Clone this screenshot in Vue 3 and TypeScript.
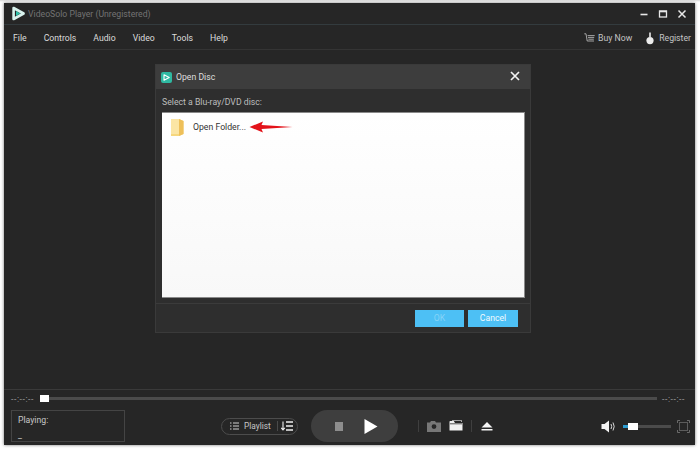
<script setup lang="ts">
const menus: string[] = ['File', 'Controls', 'Audio', 'Video', 'Tools', 'Help']
</script>

<template>
  <div class="page">
    <div class="win">
      <header class="titlebar">
        <svg class="logo" width="15" height="15" viewBox="0 0 15 15">
          <path d="M2.6 2 L12.6 7.5 L2.6 13 Z" fill="none" stroke="#d9f3ee" stroke-width="2.6" stroke-linejoin="round" />
          <path d="M5 5 L9.4 7.5 L5 10 Z" fill="#2fc0a8" />
        </svg>
        <span class="apptitle">VideoSolo Player (Unregistered)</span>
        <div class="winbtns">
          <svg width="10" height="10" viewBox="0 0 10 10"><path d="M1.5 5.5H8.5" stroke="#e8e8e8" stroke-width="1.6" /></svg>
          <svg width="10" height="10" viewBox="0 0 10 10"><rect x="1.5" y="2" width="7" height="6" fill="none" stroke="#e8e8e8" stroke-width="1.3" /><path d="M1 2.5H9" stroke="#e8e8e8" stroke-width="1.6" /></svg>
          <svg width="10" height="10" viewBox="0 0 10 10"><path d="M1.5 1.5L8.5 8.5M8.5 1.5L1.5 8.5" stroke="#e8e8e8" stroke-width="1.5" /></svg>
        </div>
      </header>
      <nav class="menubar">
        <div class="menus">
          <span v-for="m in menus" :key="m">{{ m }}</span>
        </div>
        <div class="actions">
          <span class="action">
            <svg width="11" height="11" viewBox="0 0 11 11"><path d="M0.3 0.8H2L3.2 8H10M3.6 2.6H10.7M4 4.4H10.2M4.4 6.2H9.8" fill="none" stroke="#c4c4c4" stroke-width="0.8" /></svg>
            Buy Now
          </span>
          <span class="action reg">
            <svg width="8" height="13" viewBox="0 0 8 13"><path d="M3.2 0.5H4.8V5H3.2Z" fill="#ececec" /><circle cx="4" cy="8.6" r="3.6" fill="#ececec" /></svg>
            Register
          </span>
        </div>
      </nav>

      <main class="stage">
        <section class="dialog">
          <div class="dlghead">
            <span class="dlgicon"><svg width="7" height="7" viewBox="0 0 7 7"><path d="M1 0.8L6.2 3.5L1 6.2Z" fill="none" stroke="#fff" stroke-width="1.1" stroke-linejoin="round" /></svg></span>
            <span class="dlgtitle">Open Disc</span>
            <svg class="dlgclose" width="10" height="10" viewBox="0 0 10 10"><path d="M1 1L9 9M9 1L1 9" stroke="#f2f2f2" stroke-width="1.7" /></svg>
          </div>
          <div class="dlgbody">
            <div class="label">Select a Blu-ray/DVD disc:</div>
            <div class="list">
              <div class="row">
                <svg width="13" height="18" viewBox="0 0 13 18">
                  <path d="M0 1H8L12.5 3V16L8 18H0Z" fill="#f6d77e" />
                  <path d="M8 1L12.5 3V16L8 18Z" fill="#eec05a" />
                  <path d="M0 1H8V16H0Z" fill="#fbe5a4" />
                </svg>
                <span class="rowtext">Open Folder...</span>
                <svg class="arrow" width="44" height="12" viewBox="0 0 44 12">
                  <path d="M0.5 6L14 0.5L12.5 4L43.5 6L12.5 8L14 11.5Z" fill="#e3131a" />
                </svg>
              </div>
            </div>
          </div>
          <div class="dlgfoot">
            <button class="btn ok">OK</button>
            <button class="btn">Cancel</button>
          </div>
        </section>
      </main>

      <footer class="controls">
        <div class="seek">
          <span class="time first">--:--:--</span>
          <div class="track"><i class="thumb"></i></div>
          <span class="time">--:--:--</span>
        </div>
        <div class="bottom">
          <div class="playing">
            <span>Playing:</span>
            <span>_</span>
          </div>
          <div class="playlist">
            <svg width="9" height="8" viewBox="0 0 9 8"><path d="M0 1H1.5M3 1H9M0 4H1.5M3 4H9M0 7H1.5M3 7H9" stroke="#cfcfcf" stroke-width="1" /></svg>
            <span class="pltext">Playlist</span>
            <i class="plsep"></i>
            <svg width="12" height="10" viewBox="0 0 12 10"><path d="M2 0.5V8.5M0.2 6.8L2 9L3.8 6.8" fill="none" stroke="#f0f0f0" stroke-width="1.1" /><path d="M5 1H12M5 5H12M5 9H12" stroke="#f0f0f0" stroke-width="1.4" /></svg>
          </div>
          <div class="transport">
            <i class="stop"></i>
            <svg width="14" height="15" viewBox="0 0 14 15"><path d="M0.5 0L13.5 7.5L0.5 15Z" fill="#fff" /></svg>
          </div>
          <i class="sep sep-a"></i>
          <svg class="tool" width="14" height="11" viewBox="0 0 14 11">
            <path fill-rule="evenodd" d="M0 1.5H3L4 0H8L9 1.5H14V11H0ZM7 3.2A2.4 2.4 0 1 0 7 8A2.4 2.4 0 1 0 7 3.2Z" fill="#777" />
          </svg>
          <svg class="tool folder" width="14" height="11" viewBox="0 0 14 11">
            <path d="M0.5 1.5V10.5H13.5V3H6L4.8 1H1Z" fill="#f0f0f0" />
            <path d="M1 3.8H13" stroke="#2a2a2a" stroke-width="0.8" />
            <path d="M3 0.4H12.5V2" fill="none" stroke="#e8e8e8" stroke-width="0.7" />
          </svg>
          <i class="sep sep-b"></i>
          <svg class="tool eject" width="12" height="9" viewBox="0 0 12 9"><path d="M6 0L11.5 5.5H0.5Z M0.5 7H11.5V8.6H0.5Z" fill="#f4f4f4" /></svg>
          <div class="volume">
            <svg width="16" height="13" viewBox="0 0 16 13">
              <path d="M0.5 4H3.5L8 0.5V12.5L3.5 9H0.5Z" fill="#f4f4f4" />
              <path d="M10 4Q11.4 6.5 10 9M12 2.5Q14.4 6.5 12 10.5" fill="none" stroke="#d8d8d8" stroke-width="1" />
            </svg>
            <div class="voltrack"><i class="volfill"></i><i class="volthumb"></i></div>
          </div>
          <svg class="full" width="13" height="13" viewBox="0 0 13 13">
            <path d="M0.5 3V0.5H3M10 0.5H12.5V3M12.5 10V12.5H10M3 12.5H0.5V10" fill="none" stroke="#6a6a6a" />
            <rect x="2.5" y="2.5" width="8" height="8" fill="none" stroke="#5c5c5c" />
          </svg>
        </div>
      </footer>
    </div>
  </div>
</template>

<style>
html, body { margin: 0; background: #fff; }
</style>

<style scoped>
.page {
  width: 700px;
  height: 449px;
  padding: 3px 5px 4px 4px;
  box-sizing: border-box;
  background: linear-gradient(#d8d8d8, #fff 2px);
  overflow: hidden;
  font-family: Roboto, "Liberation Sans", sans-serif;
  font-size: 8.7px;
}
.win {
  height: 100%;
  display: flex;
  flex-direction: column;
  background: #262626;
  box-shadow: 0 0 3px rgba(0, 0, 0, .55);
  color: #d4d4d4;
}
.titlebar {
  flex: 0 0 22px;
  box-sizing: border-box;
  display: flex;
  align-items: center;
  padding: 0 8px 0 7px;
  background: #262626;
  border-bottom: 1px solid #333b3e;
}
.logo { margin-right: 2px; }
.apptitle { color: #737373; }
.winbtns { margin-left: auto; display: flex; gap: 9px; align-items: center; }
.menubar {
  flex: 0 0 25px;
  box-sizing: border-box;
  display: flex;
  align-items: center;
  justify-content: space-between;
  padding: 2px 4px 0 9px;
  border-bottom: 1px solid #343434;
  color: #dcdcdc;
}
.menus { display: flex; gap: 17px; }
.actions { display: flex; gap: 14px; color: #c4c4c4; }
.action { display: flex; align-items: center; gap: 3px; }
.reg { gap: 5px; }
.stage {
  flex: 1;
  position: relative;
  background: #262626;
  border-bottom: 1px solid #3a3a3a;
}
.dialog {
  position: absolute;
  left: 152px;
  top: 15px;
  width: 374px;
  height: 267px;
  display: flex;
  flex-direction: column;
  background: #2e2e2e;
  box-shadow: 0 0 0 1px #3a3a3a;
}
.dlghead {
  flex: 0 0 24px;
  display: flex;
  align-items: center;
  padding: 0 10px 0 5px;
  background: #3d3d3d;
}
.dlgicon {
  width: 11px;
  height: 11px;
  border-radius: 2px;
  background: #2fb9a2;
  display: flex;
  align-items: center;
  justify-content: center;
  margin-right: 4px;
}
.dlgtitle { color: #dedede; }
.dlgclose { margin-left: auto; margin-top: -2px; }
.dlgbody {
  display: flex;
  flex-direction: column;
  padding: 0 5px 5px 6px;
  border-bottom: 1px solid #3b3b3b;
}
.label { color: #bdbdbd; height: 23px; line-height: 26px; }
.list {
  height: 186px;
  box-sizing: border-box;
  background: linear-gradient(#fff, #f8f8f8);
  border: 1px solid #8a8a8a;
  border-left: 0;
}
.row {
  display: flex;
  align-items: center;
  padding: 5px 0 0 9px;
  height: 18px;
}
.rowtext { color: #333; margin-left: 9px; margin-top: -1px; }
.arrow { margin-left: 3px; margin-top: -1px; }
.dlgfoot {
  flex: 1;
  display: flex;
  justify-content: flex-end;
  align-items: center;
  gap: 4px;
  padding-right: 12px;
}
.btn {
  width: 50px;
  height: 17px;
  padding: 0;
  border: 0;
  background: #4dc0f5;
  color: #f2fbff;
  font: 8.7px Roboto, "Liberation Sans", sans-serif;
}
.ok { width: 49px; color: #85d3f7; }
.controls {
  flex: 0 0 55px;
  display: flex;
  flex-direction: column;
}
.seek {
  display: flex;
  align-items: center;
  height: 17px;
  padding: 0 6px 0 7px;
  color: #9a9a9a;
}
.time { width: 27px; letter-spacing: .55px; white-space: nowrap; }
.first { width: 29px; }
.track {
  flex: 1;
  height: 3px;
  background: #4b4b4b;
  position: relative;
  margin-right: 5px;
}
.thumb {
  position: absolute;
  left: 0;
  top: -2px;
  width: 9px;
  height: 7px;
  background: #fff;
}
.bottom { flex: 1; display: flex; align-items: center; padding-left: 7px; }
.playing {
  width: 114px;
  height: 32px;
  box-sizing: border-box;
  border: 1px solid #444;
  padding: 3px 0 0 6px;
  display: flex;
  flex-direction: column;
  justify-content: space-between;
  line-height: 12px;
  color: #c6c6c6;
}
.playlist {
  margin-left: 96px;
  width: 77px;
  height: 17px;
  box-sizing: border-box;
  border: 1px solid #4c4c4c;
  border-radius: 9px;
  display: flex;
  align-items: center;
  padding-left: 8px;
  font-size: 8.3px;
  color: #c6c6c6;
}
.pltext { margin-left: 5px; }
.plsep { width: 1px; height: 10px; background: #4a4a4a; margin: 0 3px 0 6px; }
.transport {
  margin-left: 13px;
  width: 87px;
  height: 32px;
  border-radius: 16px;
  background: #3e3e3e;
  display: flex;
  align-items: center;
  padding-left: 24px;
  box-sizing: border-box;
}
.stop { width: 8px; height: 9px; background: #8d8d8d; margin-right: 21px; }
.sep { width: 1px; height: 12px; background: #3f3f3f; }
.sep-a { margin-left: 20px; }
.tool { flex: none; }
.sep + .tool { margin-left: 8px; }
.folder { margin-left: 8px; margin-top: -2px; }
.sep-b { margin-left: 8px; }
.eject { margin-left: 9px !important; }
.volume { margin-left: 108px; display: flex; align-items: center; gap: 6px; }
.voltrack {
  width: 48px;
  height: 3px;
  background: #4b4b4b;
  position: relative;
}
.volfill { position: absolute; left: 0; top: 0; width: 6px; height: 3px; background: #2c9bd0; }
.volthumb { position: absolute; left: 5px; top: -2px; width: 10px; height: 7px; background: #fff; }
.full { margin-left: 6px; }
</style>
